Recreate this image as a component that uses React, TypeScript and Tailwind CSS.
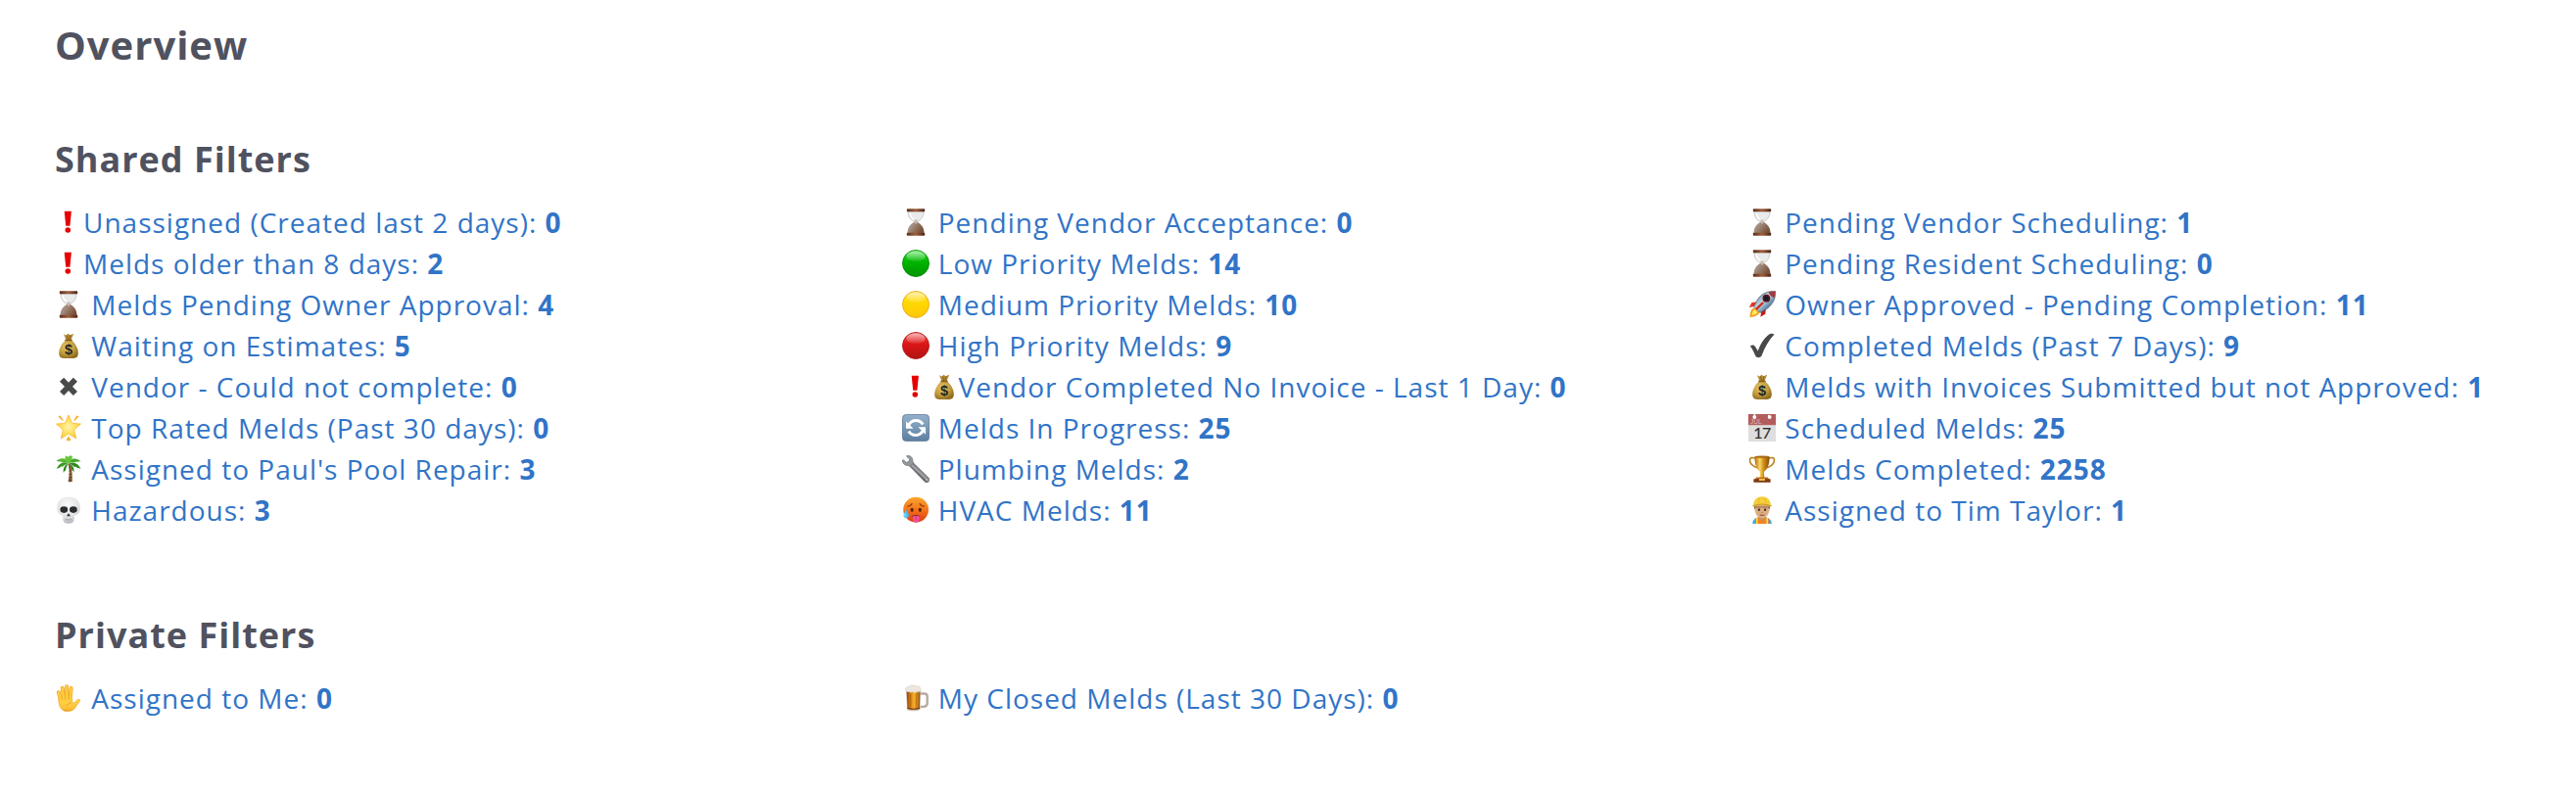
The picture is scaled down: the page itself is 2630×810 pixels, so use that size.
import type { ReactNode } from "react";

type Icon = () => ReactNode;

type Filter = {
  icons: Icon[];
  label: string;
  count: number;
  tight?: boolean;
};

function Glyph({ children }: { children: ReactNode }) {
  return (
    <svg viewBox="0 0 28 28" className="mr-px h-7 w-7 shrink-0" aria-hidden="true">
      {children}
    </svg>
  );
}

const Exclamation: Icon = () => (
  <Glyph>
    <path d="M9.700 2.700h7.200l-1.500 15h-4.200z" fill="#e60000" />
    <circle cx="13.300" cy="22" r="2.800" fill="#e60000" />
  </Glyph>
);

const Hourglass: Icon = () => (
  <Glyph>
    <defs>
      <linearGradient id="hg-cap" x1="0" x2="1">
        <stop offset="0" stopColor="#5a2f1d" />
        <stop offset="0.5" stopColor="#a0603c" />
        <stop offset="1" stopColor="#4a2415" />
      </linearGradient>
      <linearGradient id="hg-sand" x1="0" x2="1" y1="0" y2="0.5">
        <stop offset="0" stopColor="#8e99ba" />
        <stop offset="0.35" stopColor="#a58f80" />
        <stop offset="1" stopColor="#795138" />
      </linearGradient>
    </defs>
    <path d="M6 3c0 5 2 8 6 10.3h4C20 11 22 8 22 3z" fill="#e9ebeb" stroke="#b4b4b4" strokeWidth=".7" />
    <path d="M8 4.2c.4 3.500 2 5.800 4.300 7.300" fill="none" stroke="#fff" strokeWidth="1.600" />
    <path d="M12 14h4c4 2.300 6.500 6 6.500 11h-17c0-5 2.500-8.700 6.500-11z" fill="url(#hg-sand)" />
    <path d="M12.500 11.500h3l-.5 4h-2z" fill="#c9b8ac" />
    <rect x="4.800" y="0.300" width="18.400" height="2.900" rx=".8" fill="url(#hg-cap)" />
    <rect x="4.800" y="24.800" width="18.400" height="3" rx=".8" fill="url(#hg-cap)" />
  </Glyph>
);

const MoneyBag: Icon = () => (
  <Glyph>
    <defs>
      <radialGradient id="bag" cx=".4" cy=".35" r=".7">
        <stop offset="0" stopColor="#e3c76c" />
        <stop offset="0.6" stopColor="#c29b3c" />
        <stop offset="1" stopColor="#8e691c" />
      </radialGradient>
    </defs>
    <path d="M9 2.200l2.500 1.300 2-1.800 2 1.600 3.700-1.500-2.700 6.400h-5z" fill="#b08a35" />
    <path d="M12.500 3.500l1 4M15.800 3.500l-.8 4" stroke="#72551b" strokeWidth=".7" />
    <path d="M11 8.500h6c3.500 3 6.800 8 6.800 13 0 4-1.800 5.400-4.800 5.400H9c-3 0-4.800-1.400-4.800-5.400 0-5 3.300-10 6.800-13z" fill="url(#bag)" />
    <rect x="10.300" y="7.400" width="7.400" height="1.900" rx=".9" fill="#8c5c1d" />
    <text x="14" y="22.800" textAnchor="middle" fontSize="14.500" fontWeight="700" fill="#252525" className="font-['Liberation_Sans',sans-serif] tracking-normal">
      $
    </text>
  </Glyph>
);

const Cross: Icon = () => (
  <Glyph>
    <path d="M7.100 6.700l13.800 14.200M20.900 6.700L7.100 20.900" stroke="#484a4a" strokeWidth="5.800" />
  </Glyph>
);

const Star: Icon = () => (
  <Glyph>
    <defs>
      <radialGradient id="star" cx=".5" cy=".5" r=".55">
        <stop offset="0" stopColor="#fff3a8" />
        <stop offset="0.5" stopColor="#fde062" />
        <stop offset="1" stopColor="#f9be36" />
      </radialGradient>
    </defs>
    <path d="M3.300 2.200l2.300-.8 3.200 5-.9.700zM24.700 2.200l-2.300-.8-3.200 5 .9.700zM14 22.300l2.500 4.200-2.500 1.100-2.500-1.100z" fill="#f3b02f" />
    <path d="M14 .8l3.600 8.300 9 .9-6.800 6.100 2 9L14 20.300l-7.800 4.800 2-9L1.400 10l9-.9z" fill="url(#star)" stroke="#f3b433" strokeWidth=".6" strokeLinejoin="round" />
  </Glyph>
);

const Palm: Icon = () => (
  <Glyph>
    <path d="M13.300 8.500c1.800 5 1.800 11.500.2 18.800h4.200C18 20 17.500 13 15.300 8.500z" fill="#8a6038" />
    <path d="M14.500 13l2-.6M14.700 16.200l2.300-.5M14.600 19.500l2.700-.4M14.300 23l3.100-.3M14 25.800l3.400-.2" stroke="#553619" strokeWidth=".8" />
    <path d="M13.500 8C9 6.200 4 8 1.600 14.500c1.600-1.500 2.600-1.700 3.300-1.500 1.100-1.600 2.300-1.800 3.200-1.300.7-1.200 2.500-2 5.400-3.700z" fill="#399a20" />
    <path d="M14.500 8c4.500-1.500 9.500 0 12 6.200-1.700-1.300-2.600-1.500-3.400-1.100-1.200-1.400-2.300-1.600-3.200-1.100-.9-1.400-2.600-2.200-5.400-4z" fill="#2d8a1b" />
    <path d="M14 8.200C11.800 3 6.500 1.500 1.200 6.200c1.700-.4 2.600-.1 3 .6 1.700-.7 2.800-.2 3.300.6 1.900-.9 4-.3 6.500.8z" fill="#58b831" />
    <path d="M14 8.200C15.500 3 21.500 1.600 26.800 6.600c-1.700-.6-2.600-.3-3.100.4-1.700-.8-2.700-.3-3.200.4-2-.8-4.100-.2-6.500.8z" fill="#46a728" />
    <path d="M14 8.500C10.500 6 9.500 2.500 11.500.6c1 .2 1.500.8 1.800 1.500C14.500.4 16.500.2 18 1c-.5 3-1.500 5.500-4 7.500z" fill="#66c63a" />
    <path d="M13.800 8.200c-3.800 1.500-5.600 5-5 9.800 1-1.800 1.500-2.200 2.300-2.400.1-2.600 1-4.600 2.700-7.400zM14.500 8.200c3.500 1.800 5.500 4.500 5 9.200-.8-1.500-1.400-2-2.200-2.200-.2-2.500-1-4.500-2.800-7z" fill="#2f841c" />
  </Glyph>
);

const Skull: Icon = () => (
  <Glyph>
    <defs>
      <radialGradient id="skull" cx=".45" cy=".3" r=".75">
        <stop offset="0" stopColor="#fafafa" />
        <stop offset="0.65" stopColor="#e0e1e3" />
        <stop offset="1" stopColor="#a9adb2" />
      </radialGradient>
    </defs>
    <path d="M14 .4C6.500.4 2.200 5 2.200 11.500c0 3.200.8 4.600 1.800 6 .8 1.200 3.500 1.400 4 2.700.4 1.200 0 3.200.8 5 .6 1.700 2.300 2.500 5.200 2.500s4.600-.8 5.200-2.500c.8-1.800.4-3.800.8-5 .5-1.300 3.200-1.500 4-2.700 1-1.400 1.800-2.800 1.800-6C25.800 5 21.500.4 14 .4z" fill="url(#skull)" />
    <ellipse cx="9.300" cy="13.600" rx="3.900" ry="3.300" fill="#2b2c2f" />
    <ellipse cx="18.900" cy="13.600" rx="3.900" ry="3.300" fill="#2b2c2f" />
    <path d="M14 17.200l1.900 2.700-1 .7-.9-.7-.9.700-1-.7z" fill="#33343a" />
    <path d="M10.200 23c2.300.9 5.300.9 7.600 0M12 22.500v2.500M14 22.800v2.600M16 22.500v2.500" fill="none" stroke="#a0a3a8" strokeWidth=".6" />
  </Glyph>
);

function Ball({ id, top, mid, low, edge }: { id: string; top: string; mid: string; low: string; edge: string }) {
  return (
    <Glyph>
      <defs>
        <linearGradient id={id} x1="0" x2="0" y1="0" y2="1">
          <stop offset="0" stopColor={top} />
          <stop offset="0.45" stopColor={mid} />
          <stop offset="1" stopColor={low} />
        </linearGradient>
        <linearGradient id={id + "-shine"} x1="0" x2="0" y1="0" y2="1">
          <stop offset="0" stopColor="#fff" stopOpacity=".6" />
          <stop offset="1" stopColor="#fff" stopOpacity="0.05" />
        </linearGradient>
      </defs>
      <circle cx="14" cy="14" r="13.500" fill={"url(#" + id + ")"} stroke={edge} strokeWidth=".9" />
      <ellipse cx="14" cy="6.700" rx="9.700" ry="5.400" fill={"url(#" + id + "-shine)"} />
    </Glyph>
  );
}

const GreenBall: Icon = () => <Ball id="ball-g" top="#2fdc2f" mid="#00b400" low="#009500" edge="#078f07" />;
const YellowBall: Icon = () => <Ball id="ball-y" top="#ffdf38" mid="#ffd800" low="#ffc60a" edge="#e9a91b" />;
const RedBall: Icon = () => <Ball id="ball-r" top="#f04a4a" mid="#dc1515" low="#b01414" edge="#b01a1a" />;

const Refresh: Icon = () => (
  <Glyph>
    <defs>
      <linearGradient id="refresh" x1="0" x2="0" y1="0" y2="1">
        <stop offset="0" stopColor="#94b1ca" />
        <stop offset="1" stopColor="#5d7f9f" />
      </linearGradient>
    </defs>
    <rect x=".4" y=".4" width="27.200" height="27.200" rx="4" fill="url(#refresh)" stroke="#55738f" strokeWidth=".8" />
    <path d="M6.700 11.300C8.300 8 11 6.500 14 6.500c3.200 0 5.700 1.400 7.200 4M21.300 16.700c-1.600 3.300-4.300 4.800-7.300 4.800-3.200 0-5.700-1.400-7.200-4" fill="none" stroke="#fff" strokeWidth="3" />
    <path d="M4 7.200v7.600h7.500zM24 20.800v-7.600h-7.500z" fill="#fff" />
  </Glyph>
);

const Wrench: Icon = () => (
  <Glyph>
    <defs>
      <linearGradient id="wrench" gradientUnits="userSpaceOnUse" x1="15.500" y1="19" x2="19.500" y2="14.700">
        <stop offset="0" stopColor="#55555a" />
        <stop offset="0.450" stopColor="#a9abaf" />
        <stop offset="1" stopColor="#606066" />
      </linearGradient>
    </defs>
    <path d="M10.800 7.200L26.900 22.900c1.300 1.400 1.100 3.200.2 4.100-1 .9-2.900 1-4.100-.3L7.600 11z" fill="url(#wrench)" stroke="#5f595c" strokeWidth=".6" />
    <path d="M4.800.5C8.500-.2 11 2.400 10.900 5.600c0 .9.100 1.700.8 2.400l-3.300 3.200c-.8-.6-1.600-.8-2.500-.7C2.800 10.700.2 8.300.5 5l1-.2 2.600 2.500 2.900-.9.500-2.600L4.800 1.500z" fill="#94989d" stroke="#63666b" strokeWidth=".6" />
    <circle cx="24.900" cy="24.900" r="1.200" fill="#fff" stroke="#6a4a50" strokeWidth=".6" />
  </Glyph>
);

const HotFace: Icon = () => (
  <Glyph>
    <defs>
      <linearGradient id="hot" x1="0" x2="0" y1="0" y2="1">
        <stop offset="0" stopColor="#f9a62b" />
        <stop offset="0.5" stopColor="#f4741e" />
        <stop offset="1" stopColor="#de3a10" />
      </linearGradient>
    </defs>
    <circle cx="14.100" cy="13.600" r="12.900" fill="url(#hot)" />
    <path d="M5.800 10.200c1.700-.1 3.200-.9 4.200-2.600M22.300 10.200c-1.700-.1-3.200-.9-4.200-2.600" fill="none" stroke="#8c3410" strokeWidth="1.200" strokeLinecap="round" />
    <ellipse cx="10.100" cy="13.800" rx="1.600" ry="2.100" fill="#5a2208" />
    <ellipse cx="18.300" cy="13.800" rx="1.600" ry="2.100" fill="#5a2208" />
    <path d="M9.500 20.600c2.300-2 6.900-2 9.200 0-2.300.8-6.900.8-9.200 0z" fill="#6b1c0c" />
    <path d="M10.900 19.800h6.600v3.500c0 2.300-1.500 3.400-3.300 3.400s-3.300-1.100-3.300-3.400z" fill="#ee4f9c" />
    <path d="M14.200 20.500v3.500" stroke="#c72c76" strokeWidth=".7" />
    <path d="M4 13.200c1 2.400 2.900 4.200 2.900 6.300 0 1.600-1.100 2.700-2.700 2.700s-2.700-1.100-2.700-2.700c0-2.100 1.700-3.900 2.500-6.300z" fill="#4bbdf5" />
    <path d="M3.500 17.500c-.8 1.500-.8 2.300-.3 3" fill="none" stroke="#d6f2ff" strokeWidth=".9" />
  </Glyph>
);

const Rocket: Icon = () => (
  <Glyph>
    <defs>
      <linearGradient id="hull" x1="0" x2="1" y1="0" y2="1">
        <stop offset="0.200" stopColor="#7395ad" />
        <stop offset="0.450" stopColor="#c5dbe9" />
        <stop offset="0.800" stopColor="#2f5f84" />
      </linearGradient>
    </defs>
    <path d="M10 11.200l-6.500.9L.8 17l6.500-1.200z" fill="#e8331c" />
    <path d="M18 17.500l-.7 6.300-5 3 1.200-6.800z" fill="#c91a10" />
    <path d="M5.800 17.200C2.800 18.500 1.800 22 1.500 27c4.800-.3 8.500-1.700 9.800-5z" fill="#f59a1b" />
    <path d="M6.500 19c-2 .9-2.700 3.300-3 6 2.800-.3 5.200-1.200 6-3z" fill="#ffe85a" />
    <path d="M27.600.6C20 .2 13.500 2.200 9 9.500L5.500 16.300 12 22.400l6.800-3.900C25.500 13.500 28 7.500 27.600.6z" fill="url(#hull)" stroke="#3c4f5c" strokeWidth=".6" />
    <path d="M27.700.5c-2.600-.2-5 0-7.300.7 1 2.700 3 5 6 6.200.9-2.300 1.300-4.600 1.300-6.900z" fill="#a33a3e" />
    <circle cx="18.400" cy="7.700" r="3.900" fill="#5a1717" />
    <circle cx="18.400" cy="7.700" r="2.300" fill="#111b2b" />
    <path d="M14.500 12.500L8.500 18.300" stroke="#d32b18" strokeWidth="2.300" strokeLinecap="round" />
  </Glyph>
);

const Check: Icon = () => (
  <Glyph>
    <path d="M1.900 14.500c1.700-1.500 4-1.400 5.100.6l2.800 4.400C12.400 12 16.800 5.500 21.800 2.300c1.200-.6 3.400-.6 4.700.1C20.800 8.500 16.800 15.600 13.700 24c-.8 2.500-5 2.900-6.300.7C5.800 20.800 4 17.500 1.900 14.500z" fill="#484a4a" />
  </Glyph>
);

const Calendar: Icon = () => (
  <Glyph>
    <rect width="28" height="28" fill="#dedede" />
    <rect width="28" height="11" fill="#b25c5c" />
    <path d="M0 11.200h28" stroke="#c98c8c" strokeWidth=".5" />
    <circle cx="6.300" cy="3" r="1.900" fill="#fff" />
    <path d="M6.300 0v2.500" stroke="#fff" strokeWidth="1.200" />
    <circle cx="21.700" cy="3" r="1.900" fill="#fff" />
    <path d="M20.200 1l1.200 1.500" stroke="#fff" strokeWidth="1.200" />
    <text x="2" y="9.900" fontSize="6.500" fill="#e5bcbc" className="font-['Liberation_Sans',sans-serif] tracking-normal">
      JUL
    </text>
    <text x="14" y="25.200" textAnchor="middle" fontSize="16" fill="#2e2e2e" stroke="#2e2e2e" strokeWidth=".2" className="font-['Lato',sans-serif] tracking-[-0.5px]">
      17
    </text>
  </Glyph>
);

const Trophy: Icon = () => (
  <Glyph>
    <defs>
      <linearGradient id="cup" x1="0" x2="1">
        <stop offset="0" stopColor="#b06c0c" />
        <stop offset="0.350" stopColor="#fbd663" />
        <stop offset="0.600" stopColor="#cf8f18" />
        <stop offset="1" stopColor="#854d08" />
      </linearGradient>
    </defs>
    <path d="M7.500 3.200C4 2 1.500 2.300 1.500 4.800c0 4 3.800 7 8.500 8.200M20.500 3.200c3.500-1.200 6-.9 6 1.600 0 4-3.800 7-8.500 8.200" fill="none" stroke="#bd8120" strokeWidth="1.600" />
    <path d="M6.500 1.200h15c.3 7.300-1.600 12.800-5.600 15.800l.5 6h-4.800l.5-6c-4-3-5.900-8.500-5.600-15.800z" fill="url(#cup)" />
    <ellipse cx="14" cy="1.600" rx="7.500" ry="1.200" fill="#a86b14" />
    <path d="M8 22.500h12l1.300 2.500H6.700z" fill="#c2681f" />
    <rect x="5.400" y="24.300" width="17.200" height="3.500" rx=".5" fill="#7c3a12" />
    <rect x="11" y="24" width="6" height="1.900" fill="#f0c552" />
  </Glyph>
);

const Worker: Icon = () => (
  <Glyph>
    <path d="M4.300 28c0-4.200 2.700-5.900 6-6.500h7.400c3.300.6 6 2.300 6 6.500z" fill="#4aa6cf" />
    <path d="M7.300 22.600l3-1.400L14 25l3.700-3.800 3 1.400V28H7.300z" fill="#f58220" />
    <path d="M8.800 22v6M19.200 22v6" stroke="#f9e04c" strokeWidth="1.500" />
    <path d="M10.500 18h7v4L14 25l-3.500-3z" fill="#c79365" />
    <path d="M6.200 9h15.600c.4 6.500-2 13.200-7.800 13.200S5.800 15.500 6.200 9z" fill="#dbae82" />
    <path d="M5.800 10.500h16.400l-.3 2.500-2-1.800H8.100l-2 1.800z" fill="#8b5a2f" />
    <path d="M5 9.800C5 4 8.300.3 14 .3S23 4 23 9.800c-5.500-1.400-12.500-1.400-18 0z" fill="#f6cf3a" />
    <path d="M4.300 10c5.300-2.600 14.100-2.600 19.400 0" fill="none" stroke="#d0a01d" strokeWidth="1.300" />
    <path d="M11.500 1.500c-.9 1.900-1.200 3.800-1.200 5.800M16.500 1.500c.9 1.900 1.200 3.800 1.200 5.800" fill="none" stroke="#e2b12b" strokeWidth=".8" />
    <path d="M9.500 12.200h2.800M15.700 12.200h2.800" stroke="#7a4d2b" strokeWidth=".7" />
    <circle cx="10.900" cy="13.900" r="1.100" fill="#45281a" />
    <circle cx="17.100" cy="13.900" r="1.100" fill="#45281a" />
    <path d="M13.200 16.500h1.600" stroke="#b57f51" strokeWidth=".8" />
    <path d="M11.700 18.800c1.400.7 3.200.7 4.600 0" fill="none" stroke="#a0473e" strokeWidth="1.100" />
  </Glyph>
);

const Hand: Icon = () => (
  <Glyph>
    <defs>
      <linearGradient id="hand" x1="0" x2="0" y1="0" y2="1">
        <stop offset="0" stopColor="#ffd54a" />
        <stop offset="0.750" stopColor="#fcc238" />
        <stop offset="1" stopColor="#ee9d20" />
      </linearGradient>
    </defs>
    <g fill="none" stroke="#e99f28" strokeWidth="3.900" strokeLinecap="round">
      <path d="M3.900 8.200l2.300 9M7.600 3.800l1.800 11M12.100 2.100l.3 12M16.600 4l-.9 11" />
    </g>
    <path d="M3.500 15.500h14.300c.2 1.500.1 3 .7 4 1.700-.7 2.800-2.500 4.200-3.600 1.300-1 3.300-.5 3 .7-.3 1.300-2.700 3.500-4 6-1.700 3.500-4.500 5-9 5-5.500 0-8.200-3.600-9.200-12.100z" fill="url(#hand)" stroke="#e99f28" strokeWidth=".6" />
    <g fill="none" stroke="#fecb3c" strokeWidth="2.800" strokeLinecap="round">
      <path d="M3.900 8.200l2.300 9M7.600 3.800l1.800 13M12.100 2.100l.3 14M16.600 4l-.9 13" />
    </g>
    <path d="M12 22.500c.5-2 2.300-3.500 4.800-3.800" fill="none" stroke="#e79b25" strokeWidth=".8" />
  </Glyph>
);

const Beer: Icon = () => (
  <Glyph>
    <defs>
      <linearGradient id="beer" x1="0" x2="1">
        <stop offset="0" stopColor="#8c4308" />
        <stop offset="0.300" stopColor="#dc8714" />
        <stop offset="0.600" stopColor="#f9b52f" />
        <stop offset="1" stopColor="#95500e" />
      </linearGradient>
    </defs>
    <path d="M18.500 9.500h4c2 0 3.200 1 3.200 3v6.500c0 2.300-1.200 3.500-3.200 3.700l-4 .3" fill="none" stroke="#b7aca0" strokeWidth="2.400" />
    <path d="M4 6.500h15l-.5 19.500c-2.500 1.800-11.500 1.800-13.500 0z" fill="#cdbfae" />
    <path d="M4.700 7h13.700l-.5 17.500c-2.500 1.300-10 1.300-12.300 0z" fill="url(#beer)" />
    <path d="M8.800 9.500v14M14.200 9.500v14" stroke="#8a470c" strokeOpacity=".5" strokeWidth="1" />
    <path d="M5.500 23.500c2.600 1.500 9.900 1.500 12.500 0v1.200c-2.500 1.500-10 1.500-12.500 0z" fill="#74340a" />
    <path d="M3.400 5.500C3.200 3.500 5 2.300 6.800 2.300 8.500.6 12.500.5 14.600 1.700c2.200-.1 4.700 1.500 4.600 3.800-.1 2.200-2.200 2.800-4 2-1.200 1.500-3.700 1.200-4.700 0-1 .9-2.500.8-3.200-.1-1.800.9-3.700.1-3.900-1.900z" fill="#ece6df" stroke="#cfc6bc" strokeWidth=".5" />
  </Glyph>
);

const shared: Filter[][] = [
  [
    { icons: [Exclamation], label: "Unassigned (Created last 2 days):", count: 0, tight: true },
    { icons: [Exclamation], label: "Melds older than 8 days:", count: 2, tight: true },
    { icons: [Hourglass], label: "Melds Pending Owner Approval:", count: 4 },
    { icons: [MoneyBag], label: "Waiting on Estimates:", count: 5 },
    { icons: [Cross], label: "Vendor - Could not complete:", count: 0 },
    { icons: [Star], label: "Top Rated Melds (Past 30 days):", count: 0 },
    { icons: [Palm], label: "Assigned to Paul's Pool Repair:", count: 3 },
    { icons: [Skull], label: "Hazardous:", count: 3 },
  ],
  [
    { icons: [Hourglass], label: "Pending Vendor Acceptance:", count: 0 },
    { icons: [GreenBall], label: "Low Priority Melds:", count: 14 },
    { icons: [YellowBall], label: "Medium Priority Melds:", count: 10 },
    { icons: [RedBall], label: "High Priority Melds:", count: 9 },
    { icons: [Exclamation, MoneyBag], label: "Vendor Completed No Invoice - Last 1 Day:", count: 0, tight: true },
    { icons: [Refresh], label: "Melds In Progress:", count: 25 },
    { icons: [Wrench], label: "Plumbing Melds:", count: 2 },
    { icons: [HotFace], label: "HVAC Melds:", count: 11 },
  ],
  [
    { icons: [Hourglass], label: "Pending Vendor Scheduling:", count: 1 },
    { icons: [Hourglass], label: "Pending Resident Scheduling:", count: 0 },
    { icons: [Rocket], label: "Owner Approved - Pending Completion:", count: 11 },
    { icons: [Check], label: "Completed Melds (Past 7 Days):", count: 9 },
    { icons: [MoneyBag], label: "Melds with Invoices Submitted but not Approved:", count: 1 },
    { icons: [Calendar], label: "Scheduled Melds:", count: 25 },
    { icons: [Trophy], label: "Melds Completed:", count: 2258 },
    { icons: [Worker], label: "Assigned to Tim Taylor:", count: 1 },
  ],
];

const personal: Filter[][] = [
  [{ icons: [Hand], label: "Assigned to Me:", count: 0 }],
  [{ icons: [Beer], label: "My Closed Melds (Last 30 Days):", count: 0 }],
  [],
];

function FilterLink({ icons, label, count, tight }: Filter) {
  return (
    <a className="flex h-[42px] items-center whitespace-pre">
      {icons.map((Drawing, i) => (
        <Drawing key={i} />
      ))}
      <span>
        {(tight ? "" : " ") + label + " "}
        <b className="font-bold">{count}</b>
      </span>
    </a>
  );
}

function FilterColumns({ columns }: { columns: Filter[][] }) {
  return (
    <div className="grid grid-cols-[864.5px_864.5px_1fr] text-[28px] leading-[42px] text-[#3174c7]">
      {columns.map((filters, i) => (
        <div key={i} className="flex flex-col">
          {filters.map((filter) => (
            <FilterLink key={filter.label} {...filter} />
          ))}
        </div>
      ))}
    </div>
  );
}

export default function App() {
  return (
    <main className="h-[810px] w-[2630px] overflow-hidden bg-white pl-14 font-['Open_Sans',sans-serif] tracking-[1px] text-[#50525f]">
      <h1 className="pt-4 text-[40px] leading-[60px] font-bold">Overview</h1>
      <section className="pt-[60px]">
        <h2 className="mb-4 text-[36px] leading-[54px] font-bold">Shared Filters</h2>
        <FilterColumns columns={shared} />
      </section>
      <section className="pt-20">
        <h2 className="mb-4 text-[36px] leading-[54px] font-bold">Private Filters</h2>
        <FilterColumns columns={personal} />
      </section>
    </main>
  );
}
